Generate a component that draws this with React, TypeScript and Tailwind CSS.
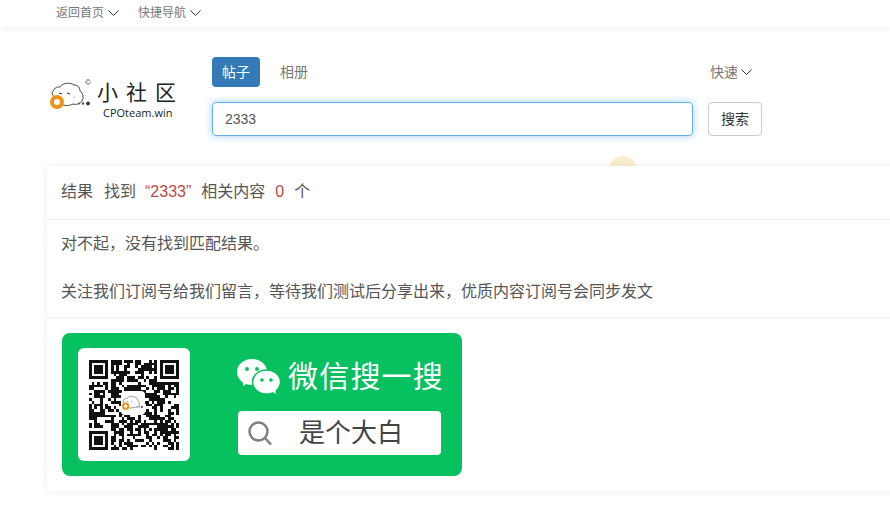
const font = { fontFamily: '"Liberation Sans", "Noto Sans CJK SC", sans-serif' };

function Chevron() {
  return (
    <svg viewBox="0 0 11 6" className="ml-[4px] h-[6px] w-[11px] shrink-0" fill="none" stroke="#333" strokeWidth="1">
      <path d="M0.500 0.500L5.500 5.500L10.500 0.500" />
    </svg>
  );
}

function Cloud({ className }: { className?: string }) {
  return (
    <svg viewBox="0 0 42 28" className={className} fill="none">
      <path
        d="M5 15C2 14 1 10 4 8C5 5 8 5 10 5C12 1 20 0 24 3C28 3 30 6 30 9C33 11 34 16 32 19C30 22 26 23 23 22C19 24 14 24 11 22"
        stroke="#444"
        strokeWidth="1"
        fill="#fff"
      />
      <path d="M9 11l3 1M17 11l3 1" stroke="#333" strokeWidth="1" />
      <circle cx="8" cy="15" r="1.500" fill="#fbd9d5" />
      <circle cx="24" cy="15" r="1.500" fill="#fbd9d5" />
      <circle cx="7" cy="20" r="5" stroke="#ef9318" strokeWidth="4" fill="#fff" />
      <circle cx="29" cy="21.500" r="1" fill="#555" />
      <circle cx="33" cy="21.500" r="1.200" fill="#555" />
      <circle cx="38" cy="21.500" r="2" fill="#4b3a2a" />
    </svg>
  );
}

function Logo() {
  return (
    <div className="flex w-[125px] shrink-0 items-start pb-[17px]">
      <Cloud className="mt-[2px] h-[28px] w-[42px] shrink-0" />
      <div className="relative ml-[5px] flex flex-col">
        <span className="absolute left-[-12px] top-[-1px] text-[8px] leading-none text-[#333]">©</span>
        <span className="whitespace-nowrap text-[21px] leading-[26px] tracking-[8px] text-[#222]">小社区</span>
        <span
          style={{ fontFamily: '"Open Sans", sans-serif' }}
          className="ml-[6px] whitespace-nowrap text-[11px] leading-[13px] text-[#222]"
        >
          CPOteam.win
        </span>
      </div>
    </div>
  );
}

const SIZE = 33;

function isFinder(x: number, y: number) {
  return (x < 8 && y < 8) || (x >= SIZE - 8 && y < 8) || (x < 8 && y >= SIZE - 8);
}

// not a real code, just the same texture
function cells() {
  const out: [number, number][] = [];
  let seed = 2333;
  for (let y = 0; y < SIZE; y++) {
    for (let x = 0; x < SIZE; x++) {
      seed = (seed * 1103515245 + 12345) & 0x7fffffff;
      if (!isFinder(x, y) && (seed >> 16) % 100 < 60) out.push([x, y]);
    }
  }
  return out;
}

function Finder({ x, y }: { x: number; y: number }) {
  return (
    <g>
      <path d={`M${x} ${y}h7v7h-7z M${x + 1} ${y + 1}v5h5v-5z`} fill="#111" fillRule="evenodd" />
      <rect x={x + 2} y={y + 2} width="3" height="3" fill="#111" />
    </g>
  );
}

function QrCode() {
  return (
    <div className="relative h-[90px] w-[90px]">
      <svg viewBox={`0 0 ${SIZE} ${SIZE}`} className="h-full w-full" shapeRendering="crispEdges">
        {cells().map(([x, y]) => (
          <rect key={`${x}-${y}`} x={x} y={y} width="1" height="1" fill="#111" />
        ))}
        <Finder x={0} y={0} />
        <Finder x={SIZE - 7} y={0} />
        <Finder x={0} y={SIZE - 7} />
      </svg>
      <div className="absolute left-[32px] top-[31px] flex h-[24px] w-[24px] items-center justify-center rounded-sm bg-white">
        <Cloud className="h-[16px] w-[22px]" />
      </div>
    </div>
  );
}

function WechatIcon() {
  return (
    <svg viewBox="0 0 43 35" className="-ml-[1px] h-[35px] w-[43px] shrink-0">
      <ellipse cx="15" cy="13" rx="15" ry="13" fill="#fff" />
      <path d="M6 21l0 6 7-4z" fill="#fff" />
      <circle cx="10" cy="10" r="2" fill="#07c160" />
      <circle cx="20" cy="10" r="2" fill="#07c160" />
      <ellipse cx="29.500" cy="23" rx="14" ry="12" fill="#fff" stroke="#07c160" strokeWidth="1.500" />
      <path d="M34 32l5 3-1-6z" fill="#fff" />
      <circle cx="25" cy="21" r="1.800" fill="#07c160" />
      <circle cx="34" cy="21" r="1.800" fill="#07c160" />
    </svg>
  );
}

function WechatBanner() {
  return (
    <div className="flex h-[143px] w-[400px] items-center rounded-lg bg-[#07c160] pl-[16px]">
      <div className="flex h-[113px] w-[112px] shrink-0 items-center justify-center rounded-md bg-white">
        <QrCode />
      </div>
      <div className="ml-[48px] flex flex-col pt-[4px]">
        <div className="flex items-center">
          <WechatIcon />
          <span className="ml-[8px] whitespace-nowrap text-[30px] leading-[36px] tracking-[1.200px] text-white">
            微信搜一搜
          </span>
        </div>
        <div className="mt-[16px] flex h-[44px] w-[203px] items-center rounded-sm bg-white pl-[10px]">
          <svg viewBox="0 0 24 24" className="h-[24px] w-[24px] shrink-0" fill="none" stroke="#808080" strokeWidth="2.500">
            <circle cx="10.500" cy="10.500" r="9" />
            <path d="M17 17l6 6.500" />
          </svg>
          <span className="ml-[27px] whitespace-nowrap text-[26px] leading-none text-[#444]">是个大白</span>
        </div>
      </div>
    </div>
  );
}

export default function App() {
  return (
    <div style={font} className="relative h-[507px] w-[890px] overflow-hidden bg-white text-[#555]">
      <div className="flex h-[27px] items-center gap-[19px] bg-white pb-[2px] pl-[56px] text-xs text-[#777] shadow-[0_2px_8px_rgba(0,0,0,0.06)]">
        <span className="flex items-center">
          返回首页
          <Chevron />
        </span>
        <span className="flex items-center">
          快捷导航
          <Chevron />
        </span>
      </div>

      <div className="flex items-end pl-[50px] pt-[30px]">
        <Logo />
        <div className="ml-[37px] flex w-[550px] flex-col">
          <div className="flex items-center text-sm">
            <span className="flex h-[30px] w-[48px] items-center justify-center rounded bg-[#337ab7] text-white">帖子</span>
            <span className="ml-[20px] text-[#777]">相册</span>
            <span className="ml-auto mr-[10px] flex items-center text-[#777]">
              快速
              <span className="-ml-[1px]">
                <Chevron />
              </span>
            </span>
          </div>
          <div className="mt-[15px] flex items-center">
            <div className="flex h-[34px] w-[481px] items-center rounded border border-[#66afe9] pl-[12px] text-sm text-[#555] shadow-[0_0_8px_rgba(102,175,233,0.6)]">
              2333
            </div>
            <button className="ml-[15px] h-[34px] w-[54px] rounded border border-[#ccc] bg-white text-sm text-[#333]">搜索</button>
          </div>
        </div>
      </div>

      <div className="absolute left-[609px] top-[156px] h-[28px] w-[28px] rounded-full bg-[#f9f0cf]" />

      <div className="relative ml-[47px] mt-[30px] h-[325px] w-[860px] rounded-sm bg-white text-base text-[#555] shadow-[0_0_10px_rgba(0,0,0,0.07)]">
        <div className="flex h-[54px] items-center border-b border-[#eee] pb-[2px] pl-[14px]">
          结果
          <span className="ml-[11px]">找到</span>
          <span className="ml-[9px] text-[#b94a48]">“2333”</span>
          <span className="ml-[10px]">相关内容</span>
          <span className="ml-[10px] text-[#b94a48]">0</span>
          <span className="ml-[10px]">个</span>
        </div>
        <div className="h-[98px] border-b border-[#eee] pl-[14px] pt-[12px] leading-[24px]">
          <p>对不起，没有找到匹配结果。</p>
          <p className="mt-[24px]">关注我们订阅号给我们留言，等待我们测试后分享出来，优质内容订阅号会同步发文</p>
        </div>
        <div className="pl-[15px] pt-[15px]">
          <WechatBanner />
        </div>
      </div>
    </div>
  );
}
